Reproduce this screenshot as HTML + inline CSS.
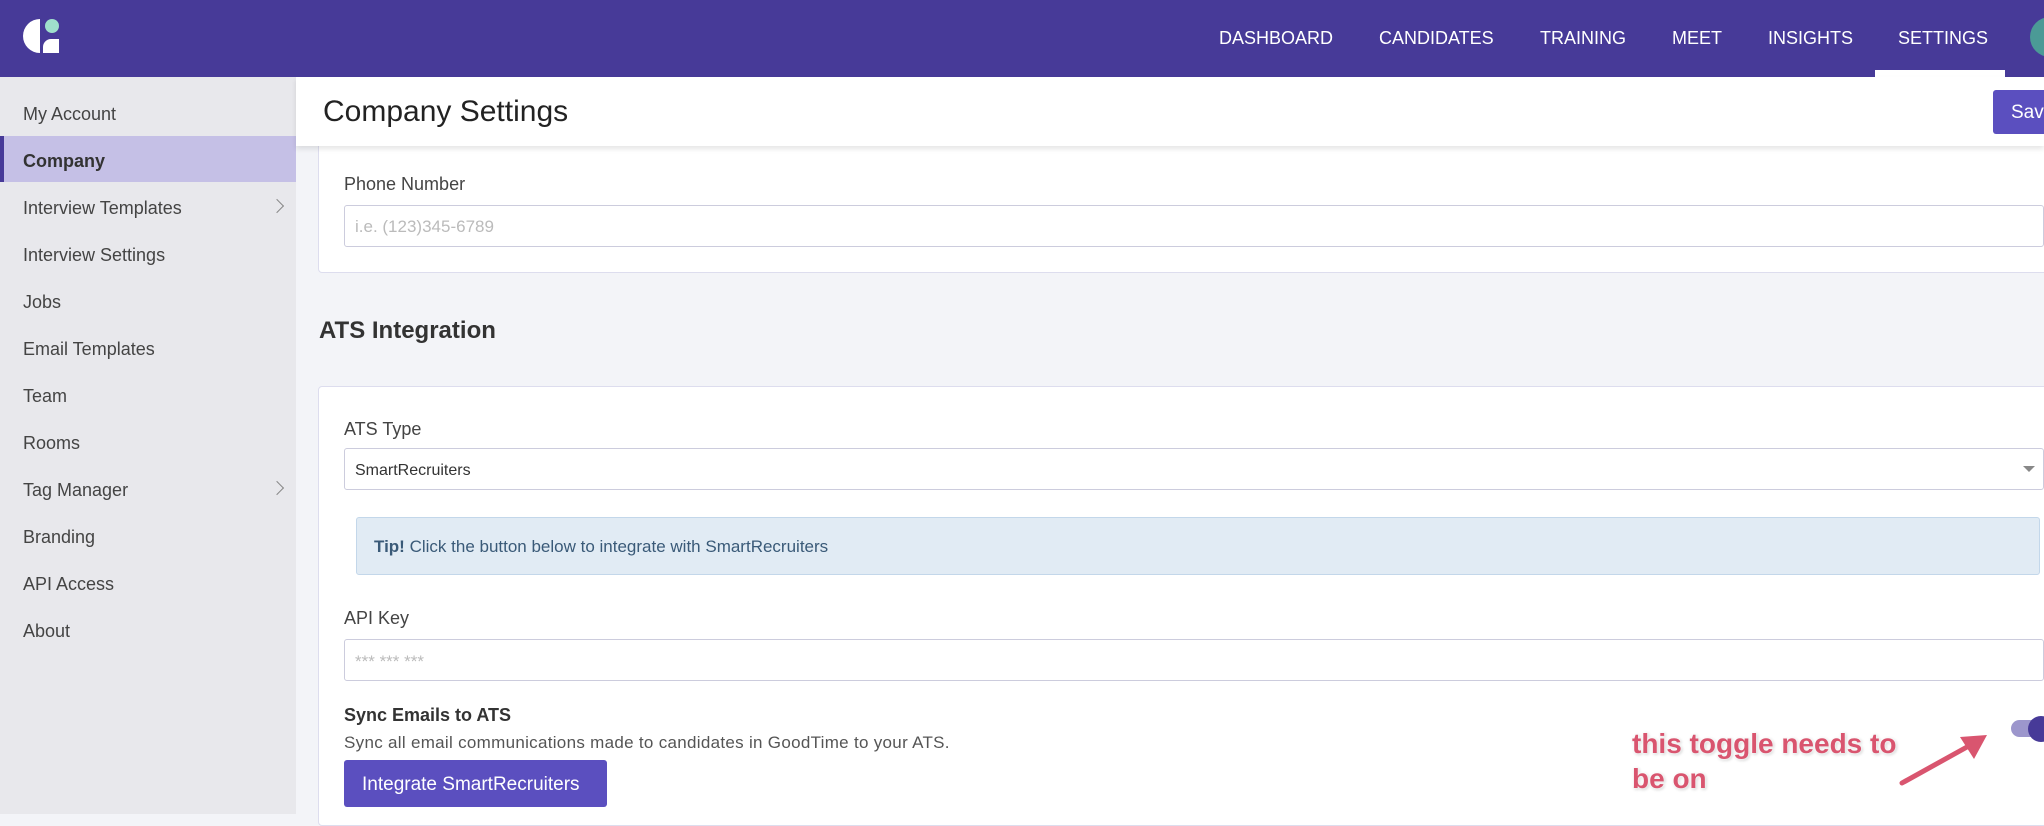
<!DOCTYPE html>
<html><head><meta charset="utf-8"><style>
*{box-sizing:border-box;margin:0;padding:0}
body{width:2044px;height:814px;overflow:hidden;font-family:"Liberation Sans",sans-serif;background:#f3f4f8;position:relative;color:#333}
.hdr{position:absolute;left:0;top:0;width:2044px;height:77px;background:#473a98}
.nav{position:absolute;top:28px;color:#fff;font-size:18px;letter-spacing:0}
.ul{position:absolute;left:1875px;top:70px;width:130px;height:7px;background:#fff}
.side{position:absolute;left:0;top:77px;width:296px;height:737px;background:#e8e8ec}
.si{position:absolute;left:23px;font-size:18px;color:#444}
.sel{position:absolute;left:0;top:136px;width:296px;height:46px;background:#c5c0e6;border-left:4px solid #473a98}
.chev{position:absolute;left:272px;width:10px;height:10px;border-right:1.5px solid #888;border-top:1.5px solid #888;transform:rotate(45deg)}
.tbar{position:absolute;left:296px;top:77px;width:1748px;height:69px;background:#fff;box-shadow:0 3px 5px rgba(0,0,0,.1);z-index:2}
.card{position:absolute;left:318px;width:1730px;background:#fff;border:1px solid #dde;border-radius:4px}
.lbl{position:absolute;left:344px;font-size:18px;color:#444}
.inp{position:absolute;left:344px;width:1700px;height:42px;border:1px solid #ccd;border-radius:3px;background:#fff;font-size:17px;color:#bbb;padding:11px 10px}
</style></head><body>
<div class="hdr">
<svg style="position:absolute;left:22px;top:17px" width="38" height="38" viewBox="0 0 38 38"><path d="M18 2 A17 17 0 0 0 18 36 Z" fill="#fff"/><path d="M21 36 L21 30 A8 8 0 0 1 29 22 L37 22 L37 36Z" fill="#fff"/><circle cx="30" cy="9" r="7" fill="#9fe0cc"/></svg>
<div class="nav" style="left:1219px">DASHBOARD</div>
<div class="nav" style="left:1379px">CANDIDATES</div>
<div class="nav" style="left:1540px">TRAINING</div>
<div class="nav" style="left:1672px">MEET</div>
<div class="nav" style="left:1768px">INSIGHTS</div>
<div class="nav" style="left:1898px">SETTINGS</div>
<div class="ul"></div>
<div style="position:absolute;left:2030px;top:17px;width:40px;height:40px;border-radius:50%;background:#4b9a96"></div>
</div>
<div class="side">
<div class="sel" style="top:59px"></div>
<div class="si" style="top:27px">My Account</div>
<div class="si" style="top:74px;font-weight:bold;color:#333">Company</div>
<div class="si" style="top:121px">Interview Templates</div><div class="chev" style="top:124px"></div>
<div class="si" style="top:168px">Interview Settings</div>
<div class="si" style="top:215px">Jobs</div>
<div class="si" style="top:262px">Email Templates</div>
<div class="si" style="top:309px">Team</div>
<div class="si" style="top:356px">Rooms</div>
<div class="si" style="top:403px">Tag Manager</div><div class="chev" style="top:406px"></div>
<div class="si" style="top:450px">Branding</div>
<div class="si" style="top:497px">API Access</div>
<div class="si" style="top:544px">About</div>
</div>
<div class="tbar">
<div style="position:absolute;left:27px;top:18px;font-size:30px;color:#222">Company Settings</div>
<div style="position:absolute;left:1697px;top:13px;width:60px;height:44px;background:#5b4fbf;border-radius:3px;color:#fff;font-size:19px;padding:12px 18px">Save</div>
</div>
<div class="card" style="top:130px;height:143px"></div>
<div class="lbl" style="top:174px">Phone Number</div>
<div class="inp" style="top:205px">i.e. (123)345-6789</div>
<div style="position:absolute;left:319px;top:317px;font-size:24px;font-weight:bold;color:#333">ATS Integration</div>
<div class="card" style="top:386px;height:440px"></div>
<div class="lbl" style="top:419px">ATS Type</div>
<div class="inp" style="top:448px;color:#333;font-size:16px;padding-top:13px">SmartRecruiters<span style="position:absolute;right:8px;top:17px;border:6px solid transparent;border-top:6px solid #888"></span></div>
<div style="position:absolute;left:356px;top:517px;width:1684px;height:58px;background:#e1ebf4;border:1px solid #c3d7ea;border-radius:3px;font-size:17px;color:#3a5a78;padding:19px 17px"><b>Tip!</b> Click the button below to integrate with SmartRecruiters</div>
<div class="lbl" style="top:608px">API Key</div>
<div class="inp" style="top:639px;padding-top:12px">*** *** ***</div>
<div class="lbl" style="top:705px;font-weight:bold;color:#333">Sync Emails to ATS</div>
<div class="lbl" style="top:733px;font-size:17px;color:#555;letter-spacing:0.3px">Sync all email communications made to candidates in GoodTime to your ATS.</div>
<div style="position:absolute;left:344px;top:760px;width:263px;height:47px;background:#5b4fbf;border-radius:3px;color:#fff;font-size:19px;padding:14px 18px">Integrate SmartRecruiters</div>
<div style="position:absolute;left:2011px;top:720px;width:40px;height:17px;border-radius:9px;background:#9c96cc"></div>
<div style="position:absolute;left:2028px;top:716px;width:26px;height:26px;border-radius:50%;background:#473a98"></div>
<div style="position:absolute;left:1632px;top:726px;font-size:28px;font-weight:bold;color:#d9556f;line-height:35px;text-shadow:0 0 3px #fff,0 0 3px #fff,1px 1px 3px rgba(0,0,0,.3)">this toggle needs to<br>be on</div>
<svg style="position:absolute;left:1890px;top:725px" width="110" height="70"><line x1="12" y1="58" x2="86" y2="17" stroke="#d9556f" stroke-width="5" stroke-linecap="round"/><path d="M97 10 L70 12 L84 34 Z" fill="#d9556f"/></svg>
</body></html>
